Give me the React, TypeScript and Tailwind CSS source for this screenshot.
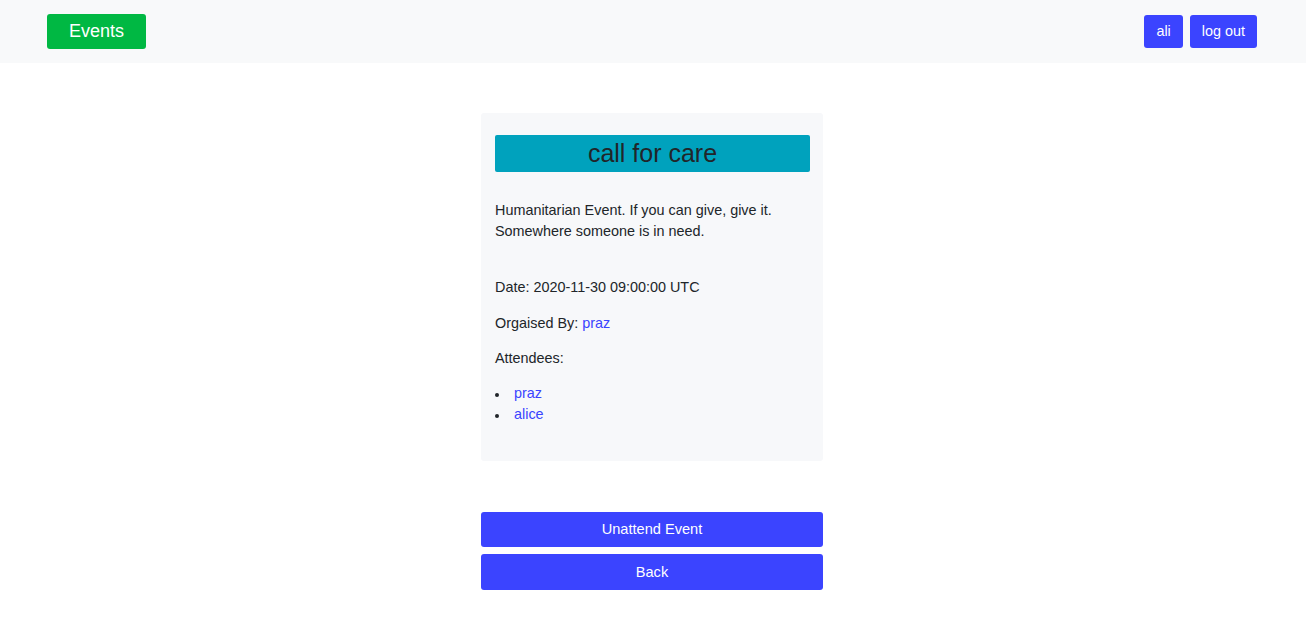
export default function App() {
  return (
    <div className="min-h-screen bg-white text-[#212529] font-['Liberation_Sans',Arial,sans-serif]">
      {/* navbar */}
      <nav className="flex h-[63px] items-center justify-between bg-[#f8f9fa] pl-[47px] pr-[49px]">
        <button className="h-[35px] rounded-[3px] bg-[#00b843] px-[22px] text-[18px] text-white">
          Events
        </button>
        <div className="flex gap-[7px]">
          <button className="h-[33px] rounded-[3px] bg-[#3b44ff] px-3 text-[14.4px] text-white">
            ali
          </button>
          <button className="h-[33px] rounded-[3px] bg-[#3b44ff] px-3 text-[14.4px] text-white">
            log out
          </button>
        </div>
      </nav>

      <main className="mx-auto w-[344px] pr-[2px] pt-[50px]">
        {/* event card */}
        <div className="rounded-[3px] bg-[#f7f8fa] pl-[14px] pr-[13px] pt-[22px] pb-[36px] text-[14.4px] leading-[21px]">
          <h1 className="flex h-[37px] items-center justify-center rounded-[2px] bg-[#00a2bd] text-[25px] text-[#212529]">
            call for care
          </h1>
          <p className="mt-[28px]">
            Humanitarian Event. If you can give, give it. Somewhere someone is in need.
          </p>
          <p className="mt-[35px]">Date: 2020-11-30 09:00:00 UTC</p>
          <p className="mt-[15px]">
            Orgaised By: <a className="text-[#3b44ff]">praz</a>
          </p>
          <p className="mt-[14px]">Attendees:</p>
          <ul className="mt-[14px]">
            {['praz', 'alice'].map((name) => (
              <li key={name} className="flex items-center">
                <span className="mr-[15px] mt-[2px] h-[4px] w-[4px] rounded-full bg-[#212529]" />
                <a className="text-[#3b44ff]">{name}</a>
              </li>
            ))}
          </ul>
        </div>

        <div className="mt-[51px] flex flex-col gap-[7px]">
          <button className="h-[35px] rounded-[3px] bg-[#3b44ff] text-[14.6px] text-white">
            Unattend Event
          </button>
          <button className="h-[36px] rounded-[3px] bg-[#3b44ff] pt-px text-[14.6px] text-white">
            Back
          </button>
        </div>
      </main>
    </div>
  );
}
